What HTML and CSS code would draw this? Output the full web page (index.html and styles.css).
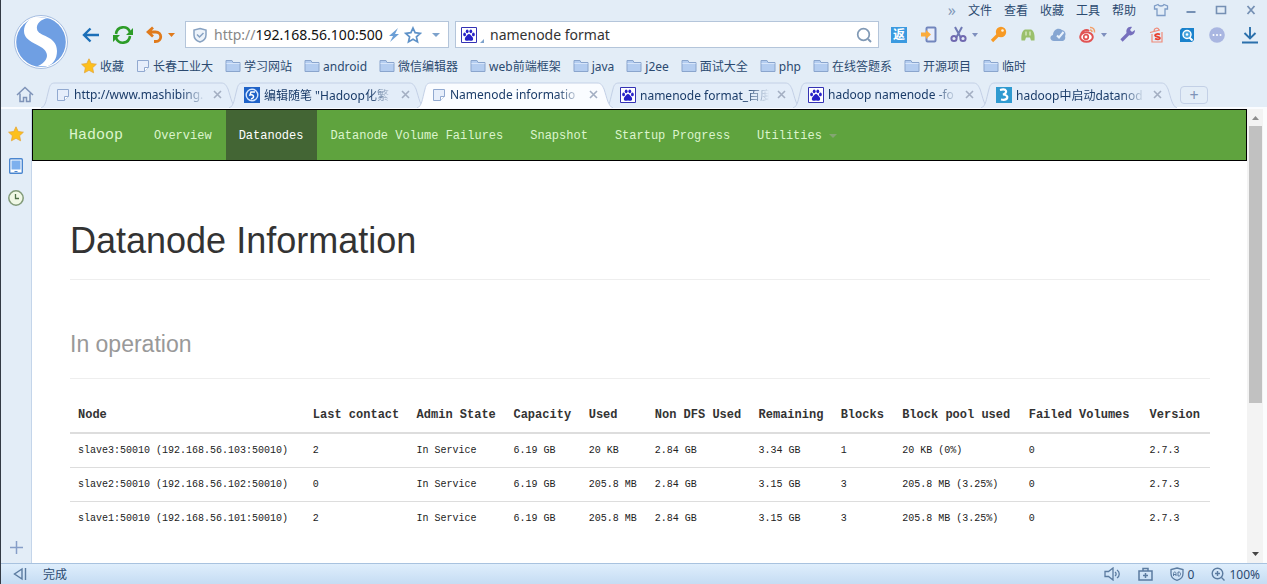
FILE: index.html
```html
<!DOCTYPE html>
<html lang="zh-CN">
<head>
  <meta charset="UTF-8">
  <meta name="viewport" content="width=device-width, initial-scale=1.0">
  <title>Namenode information</title>
  <link rel="stylesheet" href="styles.css">
</head>
<body>
  <!-- shared icons -->
  <svg class="defs" aria-hidden="true">
    <symbol id="folder" viewBox="0 0 16 14">
      <path d="M1 12.500V1.500h6l1 2h7v9z" fill="#b4cdf0" stroke="#8aa5cd"/>
      <path d="M1.500 4.500h13" stroke="#d6e5fa"/>
    </symbol>
    <symbol id="page" viewBox="0 0 14 14">
      <path d="M1.500 1.500h11v7l-4 4h-7z" fill="#e6eefb" stroke="#91a9d0"/>
      <path d="M12.500 8.500h-4v4" fill="#fff" stroke="#91a9d0"/>
    </symbol>
    <symbol id="star" viewBox="0 0 16 16">
      <path d="M8 .8l2.200 4.700 5.200.7-3.800 3.500 1 5.100L8 12.300l-4.600 2.500 1-5.100L.6 6.200l5.200-.7z" fill="#fdc01c" stroke="#e5a63a" stroke-width=".8"/>
    </symbol>
    <symbol id="paw" viewBox="0 0 16 16">
      <path d="M.5.5h15v15H.5z" fill="#fff" stroke="#3432b4"/>
      <g fill="#2722c8">
        <ellipse cx="3.600" cy="7.400" rx="1.400" ry="1.900"/>
        <ellipse cx="6.200" cy="4.300" rx="1.400" ry="1.900"/>
        <ellipse cx="9.800" cy="4.300" rx="1.400" ry="1.900"/>
        <ellipse cx="12.400" cy="7.400" rx="1.400" ry="1.900"/>
        <path d="M8 7c1.500 0 2 1.600 3.200 2.700 1.500 1.400 1.200 4-.7 4.100-1 0-1.500-.3-2.500-.3s-1.500.3-2.500.3c-1.900-.1-2.200-2.700-.7-4.100C6 8.600 6.500 7 8 7z"/>
      </g>
    </symbol>
    <symbol id="tab-shape" viewBox="0 0 196 26" preserveAspectRatio="none">
      <path d="M0 26C5 24 5 18 8 7c1-4 2-6 6-6h166c4 0 5 2 7 6 3 9 4 17 9 19" stroke="#c3d0e6" vector-effect="non-scaling-stroke"/>
    </symbol>
  </svg>

  <header class="browser">
    <a class="logo" href="#" aria-label="首页">
      <svg width="54" height="54" viewBox="0 0 54 54">
        <circle cx="27" cy="27" r="26.500" fill="#fff" stroke="#a4bce0"/>
        <circle cx="27" cy="27" r="24.800" fill="#6f9fe3"/>
        <path d="M34 3C27 4 22 9 23 14c1 8 20 6 20 22 0 8-4 13-9 15H24c7-3 11-9 8-14C28 29 10 28 10 16 10 9 15 3 22 2z" fill="#fff"/>
      </svg>
    </a>

    <div class="bars">
      <nav class="menu-row">
        <button class="more">»</button>
        <button>文件</button>
        <button>查看</button>
        <button>收藏</button>
        <button>工具</button>
        <button>帮助</button>
        <button class="win skin" aria-label="皮肤"><svg width="16" height="14" viewBox="0 0 16 14"><path d="M5 1.500L1.500 3v3H4v6.500h8V6h2.500V3L11 1.500c-1 2-5 2-6 0z" fill="none" stroke="#7e9cc6" stroke-width="1.300"/></svg></button>
        <button class="win" aria-label="最小化"><svg width="12" height="12" viewBox="0 0 12 12"><path d="M1.500 8h9" stroke="#7590b4" stroke-width="2"/></svg></button>
        <button class="win" aria-label="最大化"><svg width="12" height="12" viewBox="0 0 12 12"><path d="M1.500 2.500h9v7h-9z" fill="none" stroke="#7590b4" stroke-width="1.600"/></svg></button>
        <button class="win" aria-label="关闭"><svg width="12" height="12" viewBox="0 0 12 12"><path d="M2.500 2l7 8M9.500 2l-7 8" stroke="#7590b4" stroke-width="1.800"/></svg></button>
      </nav>

      <div class="toolbar">
        <button class="nav-btn" aria-label="后退"><svg width="18" height="16" viewBox="0 0 18 16"><path d="M17 8H2M8.500 1.500L2 8l6.500 6.500" fill="none" stroke="#1c6fb8" stroke-width="2.400"/></svg></button>
        <button class="nav-btn" aria-label="刷新"><svg width="22" height="20" viewBox="0 0 22 20"><path d="M4 9c1-8 11-9 14-2M18 11c-1 8-11 9-14 2" fill="none" stroke="#2d9c28" stroke-width="2.600"/><path d="M21 3v7h-7zM1 17v-7h7z" fill="#2d9c28"/></svg></button>
        <button class="nav-btn undo" aria-label="撤销"><svg width="17" height="18" viewBox="0 0 17 18"><path d="M2 6h7.500c7 0 7 9.500 0 9.500H8M7 1.500L2 6l5 4.500" fill="none" stroke="#e07a1b" stroke-width="2.800"/></svg><svg width="7" height="4" viewBox="0 0 7 4"><path d="M0 0h7L3.500 4z" fill="#e07a1b"/></svg></button>

        <div class="address">
          <svg width="16" height="16" viewBox="0 0 16 16"><path d="M8 1.500l6 1.500v5c0 4-3 6-6 7-3-1-6-3-6-7V3z" fill="#edf3fa" stroke="#88a2c2" stroke-width="1.500"/><path d="M5 7.500l2.500 2.500L11.500 6" fill="none" stroke="#88a2c2" stroke-width="1.500"/></svg>
          <label for="url">http://</label>
          <input type="text" id="url" value="192.168.56.100:500">
          <button aria-label="极速模式"><svg width="12" height="16" viewBox="0 0 12 16"><path d="M10 1L1 9h4l-3 6 9-8H7z" fill="#6c9fd6"/></svg></button>
          <button aria-label="添加收藏"><svg width="18" height="18" viewBox="0 0 18 18"><path d="M9 2l2.100 4.700 5.200.6-3.900 3.500 1.100 5.100L9 13.300l-4.500 2.600 1.100-5.100-3.900-3.500 5.200-.6z" fill="#fff" stroke="#5f92c8" stroke-width="1.700"/></svg></button>
          <button class="drop" aria-label="历史地址"><svg width="8" height="4" viewBox="0 0 8 4"><path d="M0 0h8L4 4z" fill="#7da2cc"/></svg></button>
        </div>

        <div class="search">
          <svg width="16" height="16"><use href="#paw"/></svg>
          <svg width="7" height="16" viewBox="0 0 7 16"><path d="M7 12v4H3z" fill="#7da2cc"/></svg>
          <input type="text" value="namenode format" aria-label="搜索">
          <button aria-label="搜索"><svg width="16" height="16" viewBox="0 0 16 16"><circle cx="7.500" cy="7.500" r="5.800" fill="none" stroke="#8099b5" stroke-width="1.700"/><path d="M12 12l3 3" stroke="#8099b5" stroke-width="2"/></svg></button>
        </div>

        <div class="plugins">
          <button aria-label="返利"><span class="rebate">返</span></button>
          <button aria-label="手机"><svg width="18" height="18" viewBox="0 0 18 18"><rect x="6.500" y="1.500" width="9" height="14" rx="1" fill="#e9eefb" stroke="#7286bd" stroke-width="2"/><path d="M1 6.500h5V4l5 4.500L6 13v-2.500H1z" fill="#fbac3c"/></svg></button>
          <button class="wide" aria-label="截图"><svg width="17" height="17" viewBox="0 0 17 17"><path d="M5 1l6 11M12 1L6 12" stroke="#6f79b4" stroke-width="2"/><circle cx="4" cy="12.500" r="2.600" fill="none" stroke="#7069b0" stroke-width="2"/><circle cx="13" cy="12.500" r="2.600" fill="none" stroke="#7069b0" stroke-width="2"/></svg><svg width="6" height="4" viewBox="0 0 6 4"><path d="M0 0h6L3 4z" fill="#7e8fbe"/></svg></button>
          <button aria-label="密码"><svg width="17" height="17" viewBox="0 0 17 17"><circle cx="11" cy="6" r="5.200" fill="#f79a25"/><circle cx="12.500" cy="4.500" r="1.300" fill="#fff3dc"/><path d="M8 9l-6 6" stroke="#f79a25" stroke-width="3.200"/></svg></button>
          <button aria-label="游戏"><svg width="14" height="14" viewBox="0 0 14 14"><path d="M4 1.500h6c3 1 4 6 3.500 11H10l-1-3H5l-1 3H.5C0 7.500 1 2.500 4 1.500z" fill="#9ac06c"/><path d="M5 3.500v4M9 3.500v4" stroke="#dcebc9" stroke-width="1.300"/></svg></button>
          <button aria-label="云同步"><svg width="18" height="16" viewBox="0 0 18 16"><path d="M5 14C1 14 0 9 4 8c0-5 5-8 9-5 4 1 4 5 3 6 1 3-1 5-3 5z" fill="#86a6d2"/><path d="M8 8.500l2 2L14.500 5" fill="none" stroke="#e9f2fc" stroke-width="2"/></svg></button>
          <button class="wide" aria-label="微博"><svg width="17" height="17" viewBox="0 0 17 17"><ellipse cx="7.500" cy="11" rx="6.300" ry="4.800" fill="#fff" stroke="#e15353" stroke-width="2"/><circle cx="7" cy="11" r="2.300" fill="none" stroke="#e15353" stroke-width="1.700"/><path d="M2 8c2-4 6-5 8-3" stroke="#e15353" stroke-width="2"/><path d="M11 1.500c3-.5 5 2 4.500 5M11 4c1.500 0 2 1 2 2" fill="none" stroke="#f2a06a" stroke-width="1.400"/></svg><svg width="6" height="4" viewBox="0 0 6 4"><path d="M0 0h6L3 4z" fill="#7e8fbe"/></svg></button>
          <button aria-label="修复"><svg width="17" height="17" viewBox="0 0 17 17"><path d="M2.500 14.500L9 8" stroke="#766fbd" stroke-width="3.200"/><path d="M13 1c-4-1-7 3-5 7 3 3 8 1 8-4l-3 2-2-2z" fill="#766fbd"/></svg></button>
          <button aria-label="搜狗"><svg width="16" height="16" viewBox="0 0 16 16"><path d="M1 5.500L11 3M5 4c0-3 4-4 5-1M3 7v8h10V5" fill="none" stroke="#f08a78" stroke-width="1.200"/><path d="M11 7.500c-2-1-5-.5-5 1s5 1 5 2.600-3 1.500-5 .5" fill="none" stroke="#e8402f" stroke-width="1.800"/></svg></button>
          <button aria-label="识图"><svg width="16" height="16" viewBox="0 0 16 16"><path d="M3 1h12v12l-2 2H1V3z" fill="#1a82cc"/><circle cx="8" cy="7.500" r="4" fill="#4ba6df" stroke="#fff" stroke-width="1.500"/><circle cx="8" cy="7.500" r="1.300" fill="#fff"/><path d="M10.500 10.500l3 3" stroke="#fff" stroke-width="2"/></svg></button>
          <button aria-label="更多"><svg width="16" height="16" viewBox="0 0 16 16"><circle cx="8" cy="8" r="7.800" fill="#a9b6e1"/><g fill="#fff"><circle cx="4.500" cy="8" r="1"/><circle cx="8" cy="8" r="1"/><circle cx="11.500" cy="8" r="1"/></g></svg></button>
          <button class="download" aria-label="下载"><svg width="18" height="18" viewBox="0 0 18 18"><path d="M9 1v11M3.500 7L9 12.500 14.500 7M1 16.500h16" fill="none" stroke="#2b70ac" stroke-width="1.900"/></svg></button>
        </div>
      </div>

      <nav class="bookmarks">
        <a href="#"><svg width="16" height="16"><use href="#star"/></svg>收藏</a>
        <a href="#"><svg width="14" height="14"><use href="#page"/></svg>长春工业大</a>
        <a href="#"><svg width="16" height="14"><use href="#folder"/></svg>学习网站</a>
        <a href="#"><svg width="16" height="14"><use href="#folder"/></svg>android</a>
        <a href="#"><svg width="16" height="14"><use href="#folder"/></svg>微信编辑器</a>
        <a href="#"><svg width="16" height="14"><use href="#folder"/></svg>web前端框架</a>
        <a href="#"><svg width="16" height="14"><use href="#folder"/></svg>java</a>
        <a href="#"><svg width="16" height="14"><use href="#folder"/></svg>j2ee</a>
        <a href="#"><svg width="16" height="14"><use href="#folder"/></svg>面试大全</a>
        <a href="#"><svg width="16" height="14"><use href="#folder"/></svg>php</a>
        <a href="#"><svg width="16" height="14"><use href="#folder"/></svg>在线答题系</a>
        <a href="#"><svg width="16" height="14"><use href="#folder"/></svg>开源项目</a>
        <a href="#"><svg width="16" height="14"><use href="#folder"/></svg>临时</a>
      </nav>
    </div>
  </header>

  <div class="tabs">
    <button class="home" aria-label="主页"><svg width="18" height="17" viewBox="0 0 18 17"><path d="M1 9l8-7.500L17 9M4 7.500v8h3.500v-4h3v4H14v-8" fill="none" stroke="#7e93b8" stroke-width="1.500"/></svg></button>
    <div class="tab">
      <svg class="shape"><use href="#tab-shape"/></svg>
      <svg width="14" height="14"><use href="#page"/></svg>
      <a href="#">http://www.mashibing.</a>
      <button aria-label="关闭标签"><svg width="9" height="9" viewBox="0 0 9 9"><path d="M1 1l7 7M8 1L1 8" stroke="#a3aec2" stroke-width="1.600"/></svg></button>
    </div>
    <div class="tab">
      <svg class="shape"><use href="#tab-shape"/></svg>
      <svg width="16" height="16" viewBox="0 0 16 16"><path d="M0 0h16v16H0z" fill="#1f62c8"/><circle cx="8" cy="8" r="5.800" fill="none" stroke="#d4e6ff" stroke-width="1.400"/><path d="M11 5H7L6 8c4-1 5 3 1 4" fill="none" stroke="#fff" stroke-width="1.500"/></svg>
      <a href="#">编辑随笔 "Hadoop化繁</a>
      <button aria-label="关闭标签"><svg width="9" height="9" viewBox="0 0 9 9"><path d="M1 1l7 7M8 1L1 8" stroke="#a3aec2" stroke-width="1.600"/></svg></button>
    </div>
    <div class="tab active">
      <svg class="shape"><use href="#tab-shape"/></svg>
      <svg width="14" height="14"><use href="#page"/></svg>
      <a href="#">Namenode informatio</a>
      <button aria-label="关闭标签"><svg width="9" height="9" viewBox="0 0 9 9"><path d="M1 1l7 7M8 1L1 8" stroke="#a3aec2" stroke-width="1.600"/></svg></button>
    </div>
    <div class="tab">
      <svg class="shape"><use href="#tab-shape"/></svg>
      <svg width="16" height="16"><use href="#paw"/></svg>
      <a href="#">namenode format_百度</a>
      <button aria-label="关闭标签"><svg width="9" height="9" viewBox="0 0 9 9"><path d="M1 1l7 7M8 1L1 8" stroke="#a3aec2" stroke-width="1.600"/></svg></button>
    </div>
    <div class="tab">
      <svg class="shape"><use href="#tab-shape"/></svg>
      <svg width="16" height="16"><use href="#paw"/></svg>
      <a href="#">hadoop namenode -fo</a>
      <button aria-label="关闭标签"><svg width="9" height="9" viewBox="0 0 9 9"><path d="M1 1l7 7M8 1L1 8" stroke="#a3aec2" stroke-width="1.600"/></svg></button>
    </div>
    <div class="tab">
      <svg class="shape"><use href="#tab-shape"/></svg>
      <svg width="16" height="16" viewBox="0 0 16 16"><path d="M0 0h16v16H0z" fill="#2f9ad0"/><path d="M4 3c7-2 8 3 3 4.500C14 8 12 14 5 12.500" fill="none" stroke="#fff" stroke-width="2.200"/></svg>
      <a href="#">hadoop中启动datanod</a>
      <button aria-label="关闭标签"><svg width="9" height="9" viewBox="0 0 9 9"><path d="M1 1l7 7M8 1L1 8" stroke="#a3aec2" stroke-width="1.600"/></svg></button>
    </div>
    <button class="new-tab" aria-label="新标签">+</button>
  </div>

  <div class="middle">
    <aside class="sidebar">
      <button aria-label="收藏夹"><svg width="16" height="16"><use href="#star"/></svg></button>
      <button aria-label="手机"><svg width="14" height="16" viewBox="0 0 14 16"><rect x=".7" y=".7" width="12.600" height="14.600" rx="1" fill="#fff" stroke="#4a86cf" stroke-width="1.400"/><path d="M2.500 2.500h9v9h-9z" fill="#7db0ee"/><path d="M5.500 13.500h3" stroke="#4a86cf"/></svg></button>
      <button aria-label="历史"><svg width="16" height="16" viewBox="0 0 16 16"><circle cx="8" cy="8" r="7.200" fill="#f0f8e6" stroke="#819a78" stroke-width="1.500"/><path d="M7.500 4v4.500H11" fill="none" stroke="#4f7048" stroke-width="1.300"/></svg></button>
      <button class="add" aria-label="添加"><svg width="13" height="13" viewBox="0 0 13 13"><path d="M0 6.500h13M6.500 0v13" stroke="#869ec8" stroke-width="1.500"/></svg></button>
    </aside>

    <div class="viewport">
      <nav class="navbar">
        <a class="brand" href="#">Hadoop</a>
        <a href="#">Overview</a>
        <a class="active" href="#">Datanodes</a>
        <a href="#">Datanode Volume Failures</a>
        <a href="#">Snapshot</a>
        <a href="#">Startup Progress</a>
        <a href="#">Utilities <span class="caret"></span></a>
      </nav>

      <main class="container">
        <h1>Datanode Information</h1>
        <h2>In operation</h2>
        <table>
          <colgroup>
            <col class="node"><col class="contact"><col class="state"><col class="capacity">
            <col class="used"><col class="non-dfs"><col class="remaining"><col class="blocks">
            <col class="pool"><col class="failed"><col class="version">
          </colgroup>
          <thead>
            <tr>
              <th>Node</th><th>Last contact</th><th>Admin State</th><th>Capacity</th><th>Used</th><th>Non DFS Used</th>
              <th>Remaining</th><th>Blocks</th><th>Block pool used</th><th>Failed Volumes</th><th>Version</th>
            </tr>
          </thead>
          <tbody>
            <tr>
              <td>slave3:50010 (192.168.56.103:50010)</td><td>2</td><td>In Service</td><td>6.19 GB</td><td>20 KB</td><td>2.84 GB</td>
              <td>3.34 GB</td><td>1</td><td>20 KB (0%)</td><td>0</td><td>2.7.3</td>
            </tr>
            <tr>
              <td>slave2:50010 (192.168.56.102:50010)</td><td>0</td><td>In Service</td><td>6.19 GB</td><td>205.8 MB</td><td>2.84 GB</td>
              <td>3.15 GB</td><td>3</td><td>205.8 MB (3.25%)</td><td>0</td><td>2.7.3</td>
            </tr>
            <tr>
              <td>slave1:50010 (192.168.56.101:50010)</td><td>2</td><td>In Service</td><td>6.19 GB</td><td>205.8 MB</td><td>2.84 GB</td>
              <td>3.15 GB</td><td>3</td><td>205.8 MB (3.25%)</td><td>0</td><td>2.7.3</td>
            </tr>
          </tbody>
        </table>
      </main>
    </div>

    <div class="scrollbar">
      <svg width="7" height="4" viewBox="0 0 7 4"><path d="M0 4h7L3.500 0z" fill="#8c8c8c"/></svg>
      <div class="track"><div class="thumb"></div></div>
      <svg width="7" height="4" viewBox="0 0 7 4"><path d="M0 0h7L3.500 4z" fill="#444"/></svg>
    </div>
  </div>

  <footer class="status">
    <button class="collapse" aria-label="收起侧栏"><svg width="14" height="14" viewBox="0 0 14 14"><path d="M9 2v10L1.500 7zM12.500 1v12" fill="none" stroke="#5b7ba0" stroke-width="1.400"/></svg></button>
    <span class="state-text">完成</span>
    <button aria-label="声音"><svg width="17" height="14" viewBox="0 0 17 14"><path d="M1 4.500h3.500L9 1v12L4.500 9.500H1zM11 5c1.500 1 1.500 3 0 4M13 3c3 2 3 6 0 8" fill="none" stroke="#5b7ba0" stroke-width="1.300"/></svg></button>
    <button aria-label="修复"><svg width="15" height="14" viewBox="0 0 15 14"><path d="M1 4h13v9H1zM5 4V1.500h5V4M7.500 6v5M5 8.500h5" fill="none" stroke="#5b7ba0" stroke-width="1.500"/></svg></button>
    <button aria-label="广告拦截"><svg width="14" height="14" viewBox="0 0 14 14"><path d="M7 1l6 1.500v4C13 10 10 12.500 7 13.300 4 12.500 1 10 1 6.500v-4z" fill="none" stroke="#5b7ba0" stroke-width="1.300"/><path d="M3.500 9V6.500c0-2 2.500-2 2.500 0V9M3.500 7.500H6M8 5h1c2 0 2 4 0 4H8z" fill="none" stroke="#5b7ba0"/></svg>0</button>
    <button aria-label="缩放"><svg width="14" height="14" viewBox="0 0 14 14"><circle cx="6.500" cy="6.500" r="5.300" fill="none" stroke="#5b7ba0" stroke-width="1.400"/><path d="M10.500 10.500L13.500 13.500M4 6.500h5M6.500 4v5" stroke="#5b7ba0" stroke-width="1.400"/></svg>100%</button>
  </footer>
</body>
</html>
```
FILE: styles.css
```css
* {
  box-sizing: border-box;
}
body {
  margin: 0;
  height: 100vh;
  display: flex;
  flex-direction: column;
  overflow: hidden;
  border-left: 1px solid #333a44;
  background: #e3edf7;
  color: #2b4a70;
  font-family: "Noto Sans", "Noto Sans CJK SC", sans-serif;
  font-size: 12px;
}
a {
  color: inherit;
  text-decoration: none;
}
button {
  padding: 0;
  border: none;
  background: none;
  color: inherit;
  font: inherit;
  cursor: pointer;
  display: flex;
  align-items: center;
  justify-content: center;
}
svg {
  flex: none;
  fill: none;
}
.defs {
  position: absolute;
  width: 0;
  height: 0;
}

/* browser header */
.browser {
  display: flex;
}
.logo {
  width: 74px;
  padding: 15px 0 0 13px;
}
.bars {
  flex: 1;
  min-width: 0;
}
.menu-row {
  height: 19px;
  display: flex;
  justify-content: flex-end;
  align-items: center;
  gap: 12px;
}
.menu-row .more {
  color: #8299b8;
  font-size: 16px;
}
.menu-row .win {
  width: 18px;
}
.menu-row .skin {
  margin-left: 4px;
}
.menu-row .win:last-child {
  margin-right: 7px;
}
.toolbar {
  height: 31px;
  display: flex;
  align-items: center;
}
.nav-btn {
  width: 32px;
}
.undo {
  width: 46px;
  gap: 5px;
  padding-right: 4px;
}
.address,
.search {
  height: 27px;
  display: flex;
  align-items: center;
  background: #fff;
  border: 1px solid #b4c5da;
  font-size: 14px;
}
.address {
  width: 264px;
  padding: 0 8px 0 6px;
}
.address label {
  margin-left: 6px;
  color: #888;
}
.address input {
  flex: 1;
  color: #111;
}
.address button {
  margin-left: 4px;
}
.address .drop {
  margin-left: 10px;
}
.address input,
.search input {
  min-width: 0;
  padding: 0;
  border: none;
  outline: none;
  background: none;
  font: inherit;
}
.search {
  flex: 1;
  margin: 0 5px 0 6px;
  padding: 0 6px 0 5px;
}
.search input {
  flex: 1;
  margin-left: 6px;
  color: #333;
}
.plugins {
  display: flex;
}
.plugins button {
  width: 30px;
  height: 24px;
}
.plugins .wide {
  width: 39px;
  gap: 5px;
}
.plugins .download {
  width: 35px;
}
.rebate {
  width: 16px;
  height: 16px;
  background: #3b9ae0;
  color: #fff;
  font-weight: bold;
  line-height: 15px;
}
.bookmarks {
  height: 32px;
  display: flex;
  align-items: center;
  gap: 12px;
  padding-left: 6px;
  white-space: nowrap;
}
.bookmarks a {
  display: flex;
  align-items: center;
  gap: 3px;
}

/* tabs */
.tabs {
  height: 27px;
  display: flex;
  align-items: center;
  border-bottom: 2px solid #fafcff;
}
.home {
  width: 43px;
  padding-left: 5px;
}
.tab {
  position: relative;
  flex: 0 1 188px;
  min-width: 0;
  height: 25px;
  display: flex;
  align-items: center;
  padding: 0 9px 0 12px;
  color: #1b3c69;
}
.tab .shape {
  position: absolute;
  top: 0;
  left: -3px;
  width: 196px;
  height: 26px;
  fill: #e3edf9;
}
.tab.active {
  z-index: 1;
}
.tab.active .shape {
  fill: #fafcff;
}
.tab > :not(.shape) {
  position: relative;
}
.tab a {
  flex: 1;
  min-width: 0;
  margin: 0 4px;
  overflow: hidden;
  white-space: nowrap;
  -webkit-mask-image: linear-gradient(to right, #000 80%, transparent 98%);
  mask-image: linear-gradient(to right, #000 80%, transparent 98%);
}
.tab button {
  width: 11px;
}
.new-tab {
  width: 28px;
  height: 18px;
  margin-left: 8px;
  border: 1px solid #c3d0e6;
  border-radius: 4px;
  color: #7e93b8;
  font-size: 16px;
}

/* sidebar and page */
.middle {
  flex: 1;
  min-height: 0;
  display: flex;
}
.sidebar {
  width: 31px;
  display: flex;
  flex-direction: column;
  align-items: center;
  gap: 16px;
  padding: 17px 0 9px;
  border-right: 1px solid #c4d5ea;
}
.sidebar .add {
  margin-top: auto;
}
.viewport {
  flex: 1;
  min-width: 0;
  overflow: hidden;
  background: #fff;
}
.navbar {
  height: 52px;
  display: flex;
  padding-left: 23px;
  background: #5fa33e;
  border: 1px solid #000;
  color: #dcf5cd;
  font-family: "Liberation Mono", monospace;
  font-size: 12px;
  line-height: 52px;
  white-space: nowrap;
}
.navbar a {
  padding: 0 14px 0 13px;
}
.navbar .brand {
  padding-right: 18px;
  font-size: 15px;
}
.navbar .active {
  background: #436534;
  color: #fff;
}
.caret {
  display: inline-block;
  vertical-align: middle;
  border: 4px solid transparent;
  border-top-color: #84a672;
  border-bottom: none;
}
.container {
  padding: 59px 37px 0 38px;
  color: #333;
}
h1,
h2 {
  margin: 0;
  border-bottom: 1px solid #eee;
  font-family: "Liberation Sans", Arial, sans-serif;
  font-weight: normal;
}
h1 {
  padding-bottom: 17px;
  font-size: 36px;
  line-height: 42px;
}
h2 {
  margin: 51px 0 20px;
  padding-bottom: 21px;
  color: #999;
  font-size: 23px;
  line-height: 26px;
}
table {
  width: 100%;
  table-layout: fixed;
  border-collapse: collapse;
  font-family: "Liberation Mono", monospace;
  font-size: 10px;
  line-height: 17px;
  white-space: nowrap;
}
th,
td {
  padding: 8px;
  text-align: left;
}
th {
  border-bottom: 2px solid #ddd;
  font-size: 12px;
}
td {
  border-top: 1px solid #ddd;
  color: #222;
}
.node { width: 20.6%; }
.contact { width: 9.1%; }
.state { width: 8.5%; }
.capacity { width: 6.6%; }
.used { width: 5.8%; }
.non-dfs { width: 9.1%; }
.remaining { width: 7.2%; }
.blocks { width: 5.4%; }
.pool { width: 11.1%; }
.failed { width: 10.6%; }
.version { width: 6%; }

.scrollbar {
  width: 20px;
  display: flex;
  flex-direction: column;
  align-items: center;
  gap: 6px;
  padding: 7px 1px 7px 2px;
  background: #f3f3f3;
  border-right: 4px solid #fbfcfd;
}
.track {
  flex: 1;
  width: 13px;
}
.thumb {
  height: 66%;
  background: #c1c1c1;
}

/* status bar */
.status {
  height: 21px;
  display: flex;
  align-items: center;
  gap: 17px;
  padding-right: 7px;
  border-top: 1px solid #a8c2df;
  background: linear-gradient(#dfeefc, #c5dcf3);
}
.status button {
  gap: 4px;
}
.status .collapse {
  width: 31px;
  padding-left: 6px;
}
.state-text {
  margin: 0 auto 0 -6px;
}
```
